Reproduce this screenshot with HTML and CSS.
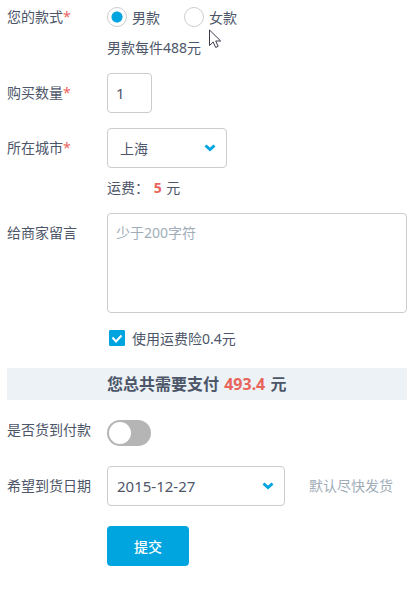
FILE: index.html
```html
<!DOCTYPE html>
<html lang="zh-CN">
<head>
  <meta charset="UTF-8" />
  <meta name="viewport" content="width=device-width, initial-scale=1.0"/>
  <title>订单</title>
  <link rel="stylesheet" href="styles.css">
</head>
<body>
  <form class="order-form">
    <div class="row row-style" role="radiogroup" aria-labelledby="styleLabel">
      <span class="label" id="styleLabel">您的款式<span class="required">*</span></span>
      <div class="control">
        <div class="radios">
          <label class="option"><input type="radio" class="radio" name="style" checked>男款</label>
          <label class="option"><input type="radio" class="radio" name="style">女款</label>
          <svg class="cursor" width="13" height="20" viewBox="0 0 13 20" aria-hidden="true">
            <path d="M.5 1v15.500l3.700-3.500 2.500 5.500 2.500-1.200-2.500-5.300h5z" fill="#fff" stroke="#3b3b4d"/>
          </svg>
        </div>
        <div class="price">男款每件488元</div>
      </div>
    </div>

    <div class="row row-count">
      <label class="label" for="count">购买数量<span class="required">*</span></label>
      <div class="control"><input type="text" class="field count" id="count" value="1"></div>
    </div>

    <div class="row row-city">
      <label class="label" for="city">所在城市<span class="required">*</span></label>
      <div class="control">
        <div class="select-box city">
          <select class="field" id="city"><option>上海</option></select>
          <svg class="arrow" width="12" height="8" viewBox="0 0 12 8" aria-hidden="true"><path d="M1.500 1.500L6 5.500l4.500-4"/></svg>
        </div>
        <div class="fee">运费： <strong class="money">5</strong> 元</div>
      </div>
    </div>

    <div class="row row-message">
      <label class="label" for="message">给商家留言</label>
      <div class="control">
        <textarea class="field message" id="message" placeholder="少于200字符"></textarea>
        <label class="insurance"><input type="checkbox" class="check" checked>使用运费险0.4元</label>
      </div>
    </div>

    <div class="total">您总共需要支付 <span class="money">493.4</span> 元</div>

    <div class="row row-cod">
      <label class="label" for="cod">是否货到付款</label>
      <div class="control"><input type="checkbox" role="switch" class="switch" id="cod"></div>
    </div>

    <div class="row row-date">
      <label class="label" for="date">希望到货日期</label>
      <div class="control date-line">
        <div class="select-box date">
          <select class="field" id="date"><option>2015-12-27</option></select>
          <svg class="arrow" width="12" height="8" viewBox="0 0 12 8" aria-hidden="true"><path d="M1.500 1.500L6 5.500l4.500-4"/></svg>
        </div>
        <span class="tip">默认尽快发货</span>
      </div>
    </div>

    <div class="actions"><button type="submit" class="submit">提交</button></div>
  </form>
</body>
</html>
```

FILE: styles.css
```css
* {
  box-sizing: border-box;
}

body {
  margin: 0;
  background: #fff;
  color: #4d5669;
  font-family: "Noto Sans", "Noto Sans CJK SC", sans-serif;
  font-size: 14px;
}

.order-form {
  padding: 1px 3px 30px 7px;
}

.row {
  display: grid;
  grid-template-columns: 100px 1fr;
  margin-bottom: 20px;
}

.label {
  line-height: 40px;
}

.required,
.money {
  color: #e8655c;
}

.money {
  margin: 0 1px;
}

/* controls */
.field {
  display: block;
  width: 100%;
  height: 40px;
  margin: 0;
  padding: 0 8px;
  border: 1px solid #ccc;
  border-radius: 4px;
  background: #fff;
  color: inherit;
  font: inherit;
}

/* style */
.row-style {
  margin-bottom: 10px;
}

.row-style .label {
  line-height: 32px;
}

.radios {
  position: relative;
  display: flex;
  gap: 24px;
  height: 32px;
}

.option {
  display: flex;
  align-items: center;
  gap: 5px;
}

.radio {
  appearance: none;
  width: 20px;
  height: 20px;
  margin: 0;
  border: 1px solid #ccc;
  border-radius: 50%;
}

.radio:checked {
  background: radial-gradient(circle, #00a5e0 5px, transparent 6px);
}

.cursor {
  position: absolute;
  left: 102px;
  top: 28px;
}

.price {
  line-height: 30px;
}

/* quantity and city */
.row-count {
  margin-bottom: 15px;
}

.count {
  width: 45px;
  font-size: 15px;
}

.row-city {
  margin-bottom: 5px;
}

.select-box {
  position: relative;
}

.select-box .field {
  appearance: none;
}

.city {
  width: 120px;
}

.city .field {
  padding: 0 12px;
}

.arrow {
  position: absolute;
  right: 11px;
  top: 16px;
  fill: none;
  stroke: #00a5e0;
  stroke-width: 3;
  pointer-events: none;
}

.fee {
  line-height: 40px;
}

/* message */
.row-message {
  margin-bottom: 5px;
}

.message {
  height: 100px;
  padding: 9px 8px;
  line-height: 20px;
  resize: none;
}

.message::placeholder {
  color: #a0adb8;
}

.insurance {
  display: flex;
  align-items: center;
  gap: 7px;
  height: 50px;
  padding-left: 2px;
}

.check {
  appearance: none;
  width: 16px;
  height: 16px;
  margin: 0;
  border: 1px solid #ccc;
  border-radius: 1px;
}

.check:checked {
  border-color: #00a5e0;
  background: #00a5e0 url("data:image/svg+xml,%3Csvg xmlns='http://www.w3.org/2000/svg' viewBox='0 0 14 14'%3E%3Cpath d='M2.500 6.500l3.500 4 5.500-6' fill='none' stroke='%23fff' stroke-width='2'/%3E%3C/svg%3E");
}

.total {
  margin-bottom: 20px;
  padding-left: 100px;
  background: #ecf2f5;
  font-size: 16px;
  font-weight: bold;
  line-height: 32px;
}

/* cash on delivery */
.row-cod .label {
  line-height: 20px;
}

.switch {
  appearance: none;
  display: block;
  width: 44px;
  height: 26px;
  margin: 0;
  padding: 2px;
  border-radius: 13px;
  background: #b5b5b5;
}

.switch::before {
  content: "";
  display: block;
  width: 22px;
  height: 22px;
  border-radius: 50%;
  background: #fff;
}

.switch:checked {
  background: #00a5e0;
}

.switch:checked::before {
  margin-left: auto;
}

/* delivery date */
.date-line {
  display: flex;
  gap: 24px;
}

.date {
  width: 178px;
}

.date .field {
  padding: 0 9px;
  font-size: 15px;
}

.tip {
  color: #a0adb8;
  line-height: 40px;
}

.actions {
  padding-left: 100px;
}

.submit {
  width: 82px;
  height: 40px;
  border: none;
  border-radius: 4px;
  background: #00a5e0;
  color: #fff;
  font: inherit;
  font-weight: 500;
  cursor: pointer;
}
```
